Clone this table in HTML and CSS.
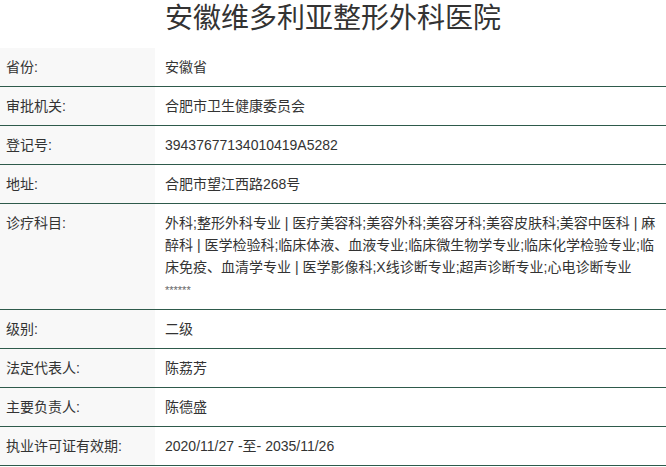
FILE: index.html
```html
<!DOCTYPE html>
<html lang="zh-CN">
<head>
<meta charset="utf-8">
<title>安徽维多利亚整形外科医院</title>
<link rel="stylesheet" href="styles.css">
</head>
<body>
<h1 class="title">安徽维多利亚整形外科医院</h1>
<table class="info">
  <tr><th>省份:</th><td>安徽省</td></tr>
  <tr><th>审批机关:</th><td>合肥市卫生健康委员会</td></tr>
  <tr><th>登记号:</th><td>39437677134010419A5282</td></tr>
  <tr><th>地址:</th><td>合肥市望江西路268号</td></tr>
  <tr><th>诊疗科目:</th><td>外科;整形外科专业 | 医疗美容科;美容外科;美容牙科;美容皮肤科;美容中医科 | 麻醉科 | 医学检验科;临床体液、血液专业;临床微生物学专业;临床化学检验专业;临床免疫、血清学专业 | 医学影像科;X线诊断专业;超声诊断专业;心电诊断专业<br><span class="stars">******</span></td></tr>
  <tr><th>级别:</th><td>二级</td></tr>
  <tr><th>法定代表人:</th><td>陈荔芳</td></tr>
  <tr><th>主要负责人:</th><td>陈德盛</td></tr>
  <tr><th>执业许可证有效期:</th><td>2020/11/27 -至- 2035/11/26</td></tr>
</table>
</body>
</html>
```
FILE: styles.css
```css
html, body {
  margin: 0;
  padding: 0;
  background: #fff;
}
body {
  font-family: "Liberation Sans", "Noto Sans CJK SC", sans-serif;
  color: #333;
  font-size: 14px;
}
.title {
  margin: 0 0 10px 0;
  height: 38px;
  line-height: 38px;
  font-size: 28px;
  font-weight: normal;
  text-align: center;
  color: #333;
}
.info {
  width: 100%;
  border-collapse: collapse;
}
.info th, .info td {
  border-bottom: 1px solid #2e5a4b;
  vertical-align: top;
  padding: 8px 10px 8px 10px;
  line-height: 22px;
  font-weight: normal;
  text-align: left;
}
.info th {
  width: 155px;
  box-sizing: border-box;
  padding-left: 6px;
  background: #f8f8f8;
}
.info td {
  padding-right: 4px;
}
.stars {
  font-size: 11px;
  color: #666;
}
```
